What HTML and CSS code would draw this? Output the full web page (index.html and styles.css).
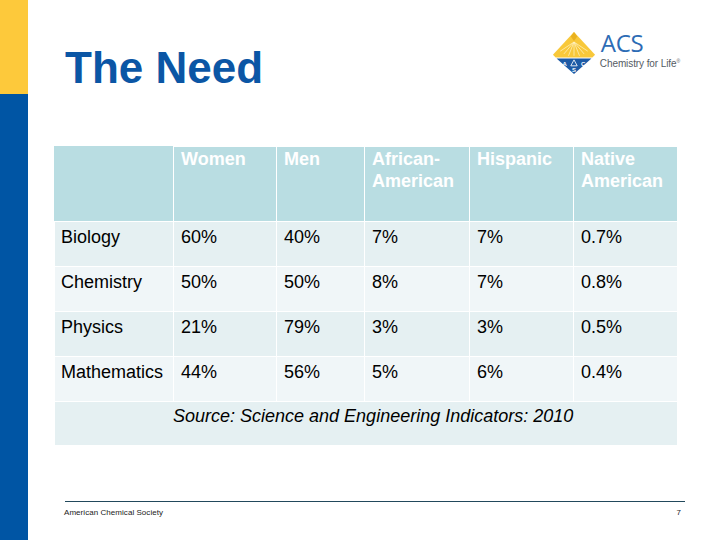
FILE: index.html
```html
<!DOCTYPE html>
<html>
<head>
<meta charset="utf-8">
<link rel="stylesheet" href="styles.css">
</head>
<body>
<div class="slide">
  <div class="sidebar">
    <div class="side-yellow"></div>
    <div class="side-blue"></div>
  </div>
  <div class="main">
    <div class="top">
      <h1 class="title">The Need</h1>
      <div class="logo">
        <svg class="emblem" width="44" height="44" viewBox="0 0 48 48">
          <polygon points="24,1 47,26 44,29 4,29 1,26" fill="#f8c83a"/>
          <path d="M24 1 L20.5 6 L24 11 L27.5 6 Z" fill="#e9b11f"/>
          <g stroke="#fff3c4" stroke-width="0.8" fill="none">
            <path d="M24 12 L9 22"/><path d="M24 12 L13 25"/><path d="M24 12 L18 27"/>
            <path d="M24 12 L39 22"/><path d="M24 12 L35 25"/><path d="M24 12 L30 27"/>
            <path d="M24 12 L24 27"/>
          </g>
          <polygon points="5,30 43,30 24,47" fill="#1c5aa6"/>
          <text x="11.5" y="38" class="logo-letter">A</text>
          <text x="31.5" y="38" class="logo-letter">C</text>
          <text x="21.7" y="45" class="logo-letter">S</text>
          <polygon points="24,31.5 27.5,38 20.5,38" fill="none" stroke="#ffffff" stroke-width="0.9"/>
        </svg>
        <div class="logo-text">
          <div class="acs">ACS</div>
          <div class="tagline">Chemistry for Life<sup>®</sup></div>
        </div>
      </div>
    </div>
    <table class="data">
      <colgroup>
        <col class="c1"><col class="c2"><col class="c3"><col class="c4"><col class="c5"><col class="c6">
      </colgroup>
      <thead>
        <tr class="head">
          <th></th>
          <th>Women</th>
          <th>Men</th>
          <th>African-<br>American</th>
          <th>Hispanic</th>
          <th>Native<br>American</th>
        </tr>
      </thead>
      <tbody>
        <tr class="dark"><td>Biology</td><td>60%</td><td>40%</td><td>7%</td><td>7%</td><td>0.7%</td></tr>
        <tr class="light"><td>Chemistry</td><td>50%</td><td>50%</td><td>8%</td><td>7%</td><td>0.8%</td></tr>
        <tr class="dark"><td>Physics</td><td>21%</td><td>79%</td><td>3%</td><td>3%</td><td>0.5%</td></tr>
        <tr class="light"><td>Mathematics</td><td>44%</td><td>56%</td><td>5%</td><td>6%</td><td>0.4%</td></tr>
        <tr class="dark source"><td colspan="6">Source: Science and Engineering Indicators: 2010</td></tr>
      </tbody>
    </table>
    <div class="footer">
      <span class="org">American Chemical Society</span>
      <span class="page">7</span>
    </div>
  </div>
</div>
</body>
</html>
```

FILE: styles.css
```css
html, body {
  margin: 0;
  padding: 0;
  background: #ffffff;
}
body {
  font-family: "Liberation Sans", Arial, sans-serif;
}
.slide {
  width: 720px;
  height: 540px;
  display: flex;
  overflow: hidden;
}
.sidebar {
  width: 28px;
  display: flex;
  flex-direction: column;
  flex-shrink: 0;
}
.side-yellow {
  height: 94px;
  background: #fdc93b;
}
.side-blue {
  flex: 1;
  background: #0055a4;
}
.main {
  flex: 1;
  display: flex;
  flex-direction: column;
}
.top {
  height: 146px;
  display: flex;
  justify-content: space-between;
  align-items: flex-start;
}
.title {
  margin: 43px 0 0 37px;
  font-size: 44px;
  line-height: 50px;
  font-weight: bold;
  color: #0b56a5;
}
.logo {
  margin: 31px 40px 0 0;
  display: flex;
  align-items: flex-start;
  gap: 4px;
}
.emblem {
  display: block;
}
.logo-letter {
  font-family: "Liberation Sans", Arial, sans-serif;
  font-size: 6.5px;
  font-weight: bold;
  fill: #ffffff;
}
.logo-text {
  display: flex;
  flex-direction: column;
}
.acs {
  font-family: "Open Sans", "Liberation Sans", sans-serif;
  font-size: 24px;
  line-height: 25px;
  color: #2d6cb5;
  margin-top: -1px;
  margin-left: 1px;
  letter-spacing: -0.3px;
}
.tagline {
  font-family: "Liberation Sans", Arial, sans-serif;
  font-size: 10px;
  line-height: 12px;
  color: #555b63;
  letter-spacing: -0.1px;
}
.tagline sup {
  font-size: 5px;
}
.data {
  margin-left: 26px;
  border-collapse: collapse;
  table-layout: fixed;
  width: 623px;
  font-size: 18px;
}
.c1 { width: 119px; }
.c2 { width: 103px; }
.c3 { width: 88px; }
.c4 { width: 105px; }
.c5 { width: 104px; }
.c6 { width: 104px; }
.data th, .data td {
  border: 1px solid #ffffff;
  text-align: left;
  vertical-align: top;
  padding: 0 0 0 7px;
  line-height: 22px;
}
.data th {
  font-weight: bold;
  color: #ffffff;
  background: #b9dde2;
  height: 73px;
  padding-top: 1px;
}
.data th:first-child {
  border-top-color: #b9dde2;
  border-left-color: #b9dde2;
}
.data td {
  color: #000000;
  height: 40px;
  padding-top: 4px;
}
.data tr.dark td { background: #e5f0f2; }
.data tr.light td { background: #f0f6f8; }
.data tr td:first-child { padding-left: 6px; }
.data tr.source td {
  font-style: italic;
  padding-left: 118px;
  padding-top: 3px;
}
.footer {
  margin: 55px 35px 0 37px;
  border-top: 1px solid #22495c;
  display: flex;
  justify-content: space-between;
  padding-top: 6px;
  font-size: 8px;
  line-height: 10px;
  color: #222222;
}
.org {
  margin-left: -1px;
  letter-spacing: 0.05px;
}
.page {
  margin-right: 4px;
}
```
